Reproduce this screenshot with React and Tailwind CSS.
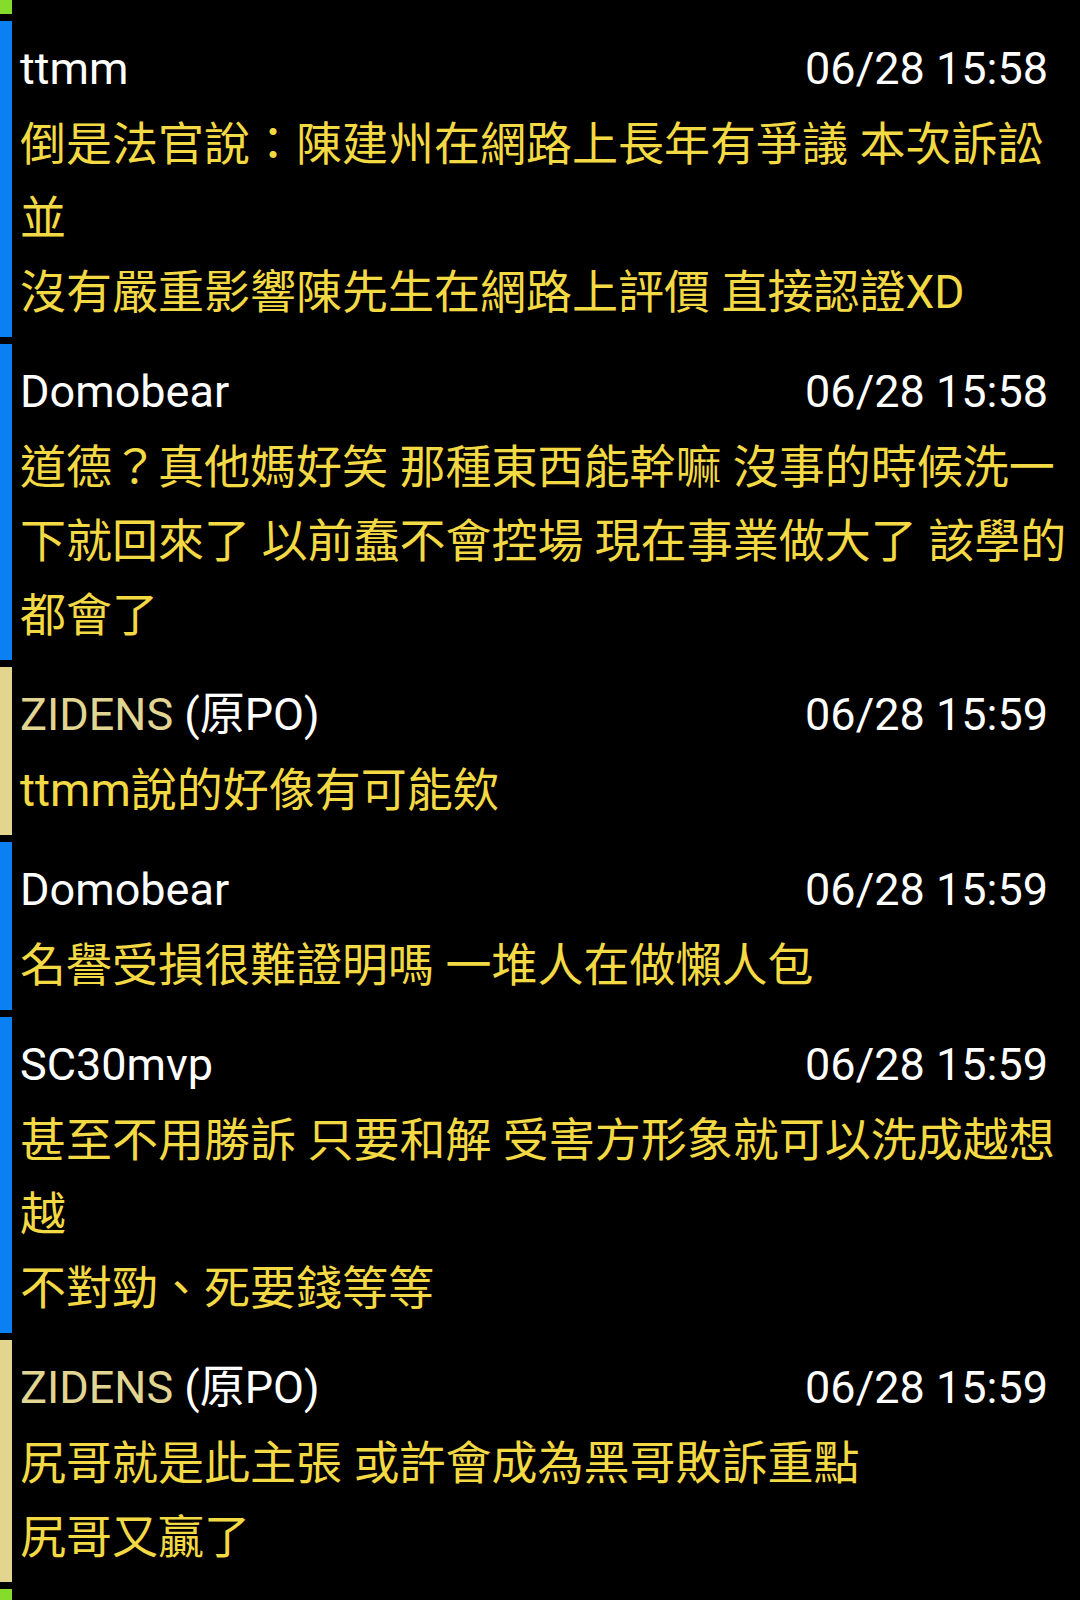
import React from 'react';

const comments = [
  {
    name: 'ttmm',
    time: '06/28 15:58',
    lines: ['倒是法官說：陳建州在網路上長年有爭議 本次訴訟並', '沒有嚴重影響陳先生在網路上評價 直接認證XD'],
  },
  {
    name: 'Domobear',
    time: '06/28 15:58',
    lines: ['道德？真他媽好笑 那種東西能幹嘛 沒事的時候洗一下就回來了 以前蠢不會控場 現在事業做大了 該學的都會了'],
  },
  { name: 'ZIDENS', op: true, time: '06/28 15:59', lines: ['ttmm說的好像有可能欸'] },
  { name: 'Domobear', time: '06/28 15:59', lines: ['名譽受損很難證明嗎 一堆人在做懶人包'] },
  {
    name: 'SC30mvp',
    time: '06/28 15:59',
    lines: ['甚至不用勝訴 只要和解 受害方形象就可以洗成越想越', '不對勁、死要錢等等'],
  },
  {
    name: 'ZIDENS',
    op: true,
    time: '06/28 15:59',
    lines: ['尻哥就是此主張 或許會成為黑哥敗訴重點', '尻哥又贏了'],
  },
];

const font = "font-['Roboto','Noto_Sans_CJK_TC',sans-serif]";

const Comment = ({ c }) => {
  return (
    <div className="flex">
      <div className={c.op ? 'w-[12px] shrink-0 bg-[#e4d58e]' : 'w-[12px] shrink-0 bg-[#0a80f2]'} />
      <div className="flex-1 pl-[8px] pt-[10px] pb-[8px]">
        {/* name + time */}
        <div className="flex justify-between items-baseline pr-[32px] text-[45px] leading-[76px]">
          <span>
            {c.op ? (
              <>
                <span className="text-[#e2d592]">{c.name}</span>
                <span className="text-white"> (原PO)</span>
              </>
            ) : (
              <span className="text-white">{c.name}</span>
            )}
          </span>
          <span className="text-white">{c.time}</span>
        </div>
        {c.lines.map((l, i) => (
          <p key={i} className="text-[46px] leading-[74px] text-[#f3d944]">
            {l}
          </p>
        ))}
      </div>
    </div>
  );
};

const App = () => {
  return (
    <section className={`bg-black h-[1600px] overflow-hidden flex flex-col gap-[7px] ${font}`}>
      <div className="h-[14px] w-[12px] shrink-0 bg-[#86dc2a]" />
      {comments.map((c, i) => (
        <Comment key={i} c={c} />
      ))}
      <div className="h-[30px] w-[12px] shrink-0 bg-[#86dc2a]" />
    </section>
  );
};

export default App;
